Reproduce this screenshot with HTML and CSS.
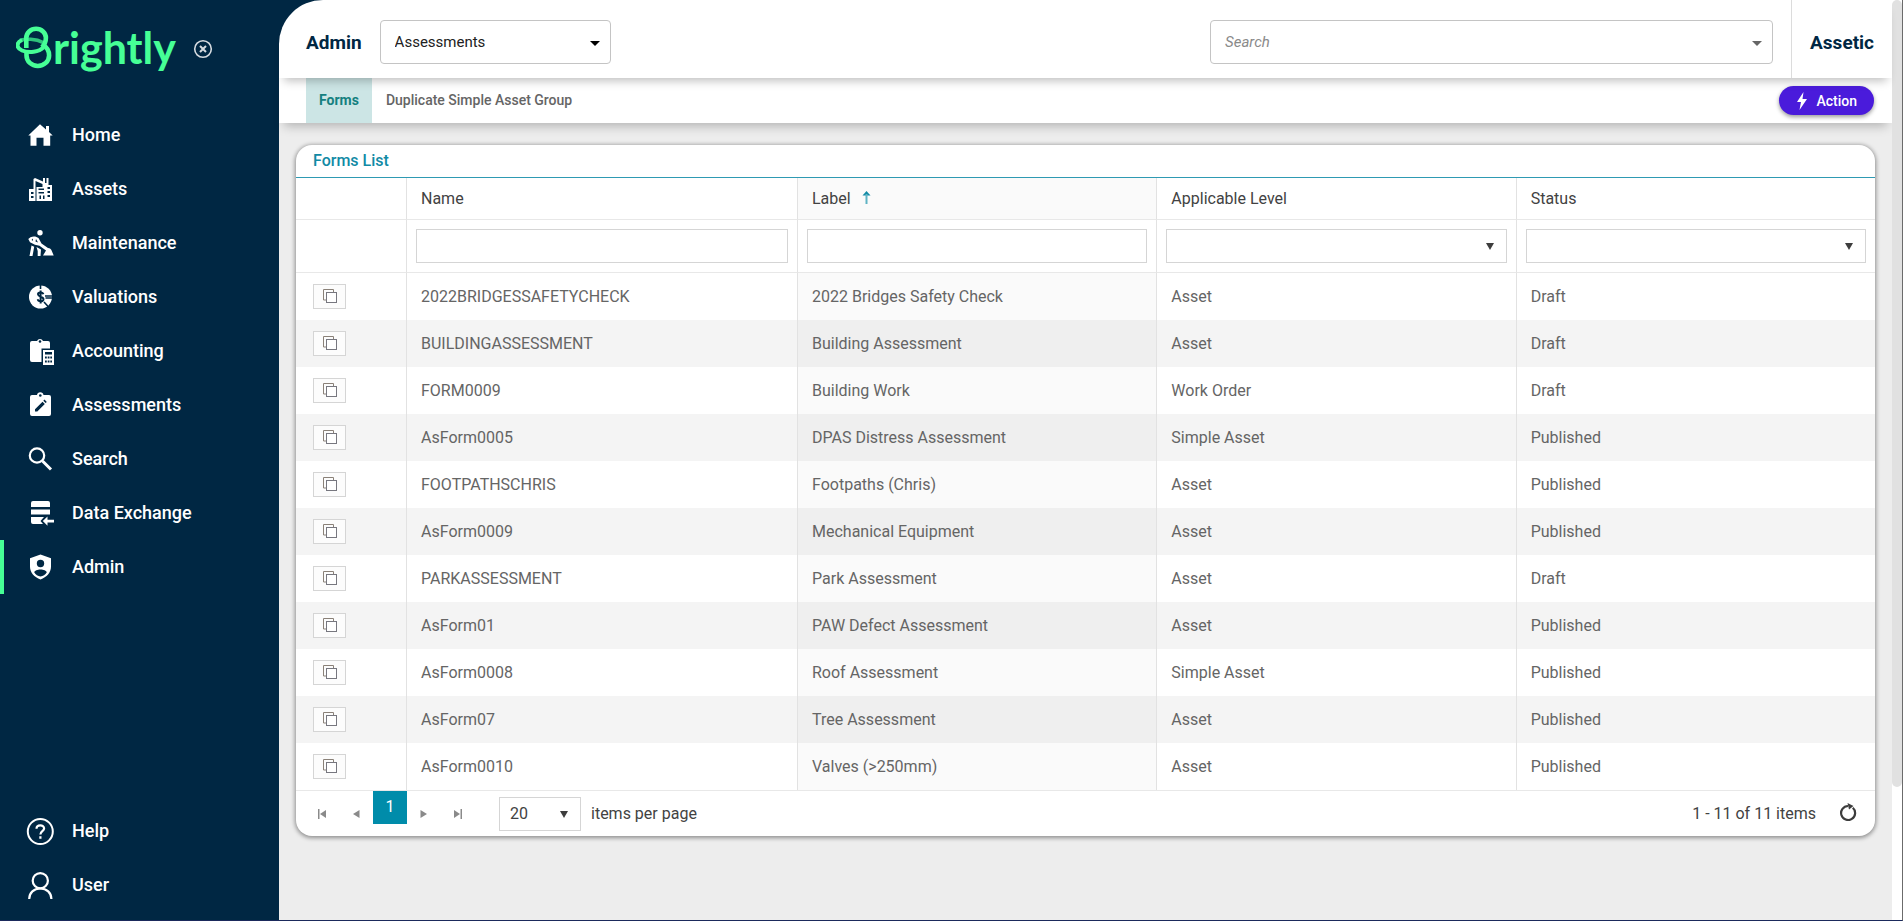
FILE: index.html
```html
<!DOCTYPE html>
<html lang="en">
<head>
  <meta charset="UTF-8" />
  <meta name="viewport" content="width=device-width, initial-scale=1.0"/>
  <title>Forms List</title>
  <link rel="stylesheet" href="styles.css">
</head>
<body>

  <!-- icon used by every row button -->
  <svg class="sprite" width="0" height="0" aria-hidden="true">
    <symbol id="copy" viewBox="0 0 16 16">
      <path d="M4 12H1.500V1.500H11.500V4" fill="none" stroke="#8a8178"/>
      <rect x="4.500" y="4.500" width="10" height="10" fill="#fff" stroke="#77777f"/>
    </symbol>
  </svg>

  <aside class="sidebar">
    <div class="brand">
      <a class="logo" href="#" aria-label="Brightly">
        <svg width="37" height="44" viewBox="0 0 37 44" fill="none" stroke="#46ff96" stroke-width="4.600">
          <path d="M4 14.500C9 12.500 20 12.500 27 16.500" stroke="#2fc27c" stroke-width="3.600"/>
          <path d="M10.500 26v3.500a11.300 10.500 0 0 0 22.600 0c0-5-2.500-8.500-6-10.500"/>
          <path d="M10.300 22V11.800a9.800 9 0 0 1 19.600 0c0 4-1.500 7-4 9.500"/>
          <path d="M6 14C0 16.500 0 22 6 24.500c7 2.800 17 1.500 21.500-3.200" stroke-width="4"/>
        </svg>
        <span>rightly</span>
      </a>
      <button class="close" aria-label="Close menu">
        <svg width="20" height="20" viewBox="0 0 20 20" fill="none" stroke="#d5dbe0" stroke-width="2">
          <circle cx="10" cy="10" r="8.300" stroke-width="1.600"/>
          <path d="M7 7l6 6M13 7l-6 6"/>
        </svg>
      </button>
    </div>

    <nav class="menu">
      <a href="#">
        <svg viewBox="0 0 28 28"><path d="M14 3.300l6 5.200V5h3v6l3.700 3.500h-2.500v10.200h-6.700v-8h-7v8H4.500V14.500H2.300z"/></svg>
        <span>Home</span>
      </a>
      <a href="#">
        <svg viewBox="0 0 28 28"><path fill-rule="evenodd" d="M3 14h4.500V4l1.500-1 8 3.500V3h2v5h1.500V3h2v7H26v16H3zM9.500 6v20h1V12h6V9zM5 17v2h2.500v-2zM5 21v2h2.500v-2zM12.500 13.500V15H18v-1.500zM12.500 17v1.500H18V17zM13.500 20.500V24h1.500v-3.500zM17 20.500V24h1.500v-3.500zM21.500 12v2H24v-2zM21.500 16v2H24v-2zM21.500 20v2H24v-2z"/></svg>
        <span>Assets</span>
      </a>
      <a href="#">
        <svg viewBox="0 0 28 28"><circle cx="14" cy="3.700" r="2.700"/><path d="M4.500 8.300c3-1.500 6-.8 8 .7l3 5.500 6.500 4.500c2 .3 3 1 3.500 2.200l2.200 5.300H17l3-5-6.500-4.700-4.500-1-5-2.500L2.300 10zM7 9.500L5.500 11l1.500.700zM10 10l-.5 2.500 2.500 1z" fill-rule="evenodd"/><path d="M5.500 16.500l2.700 1.300L6.500 27H3.500zM10.500 18l4.500 2.500-.5 6.500h-2.800v-5z"/></svg>
        <span>Maintenance</span>
      </a>
      <a href="#">
        <svg viewBox="0 0 28 28"><circle cx="14.500" cy="14" r="11.500"/><g fill="none" stroke="#002743" stroke-width="1.600"><path d="M14.500 2v4M19 13h8M19.500 15h7M18 19l5.500 6"/><path d="M17.300 11.300c-.5-2.400-5.300-2.300-5.300 0 0 2.700 5.500 2.200 5.500 5s-5.500 2.700-5.700 0M14.600 7.500v13" stroke-width="2"/></g></svg>
        <span>Valuations</span>
      </a>
      <a href="#">
        <svg viewBox="0 0 28 28"><path d="M6 4h5a3.300 3.300 0 0 1 6 0h5a2 2 0 0 1 2 2v5.500h-8.500V25H6a2 2 0 0 1-2-2V6a2 2 0 0 1 2-2z"/><circle cx="14" cy="4.500" r="1.300" fill="#002743"/><path fill-rule="evenodd" d="M17 13h11v15H17zM19 15v2.500h7V15zM19 19.500v2h1.800v-2zM21.700 19.500v2h1.800v-2zM24.300 19.500v2H26v-2zM19 23.500v2h1.800v-2zM21.700 23.500v2h1.800v-2zM24.300 23.500v2H26v-2z"/></svg>
        <span>Accounting</span>
      </a>
      <a href="#">
        <svg viewBox="0 0 28 28"><path d="M6 4h5a3.300 3.300 0 0 1 6.500 0H23a2 2 0 0 1 2 2v17a2 2 0 0 1-2 2H6a2 2 0 0 1-2-2V6a2 2 0 0 1 2-2z"/><circle cx="14.300" cy="4.500" r="1.300" fill="#002743"/><path d="M9 20.500v-2.300l7.500-7.500 2.300 2.300-7.500 7.500zM17.300 9.800l1.200-1.200 2.300 2.300-1.200 1.200z" fill="#002743"/></svg>
        <span>Assessments</span>
      </a>
      <a href="#">
        <svg viewBox="0 0 28 28" fill="none" stroke="#fff"><circle cx="11" cy="10.500" r="7.200" stroke-width="2.200"/><path d="M16.500 16l8.500 8.500" stroke-width="3"/></svg>
        <span>Search</span>
      </a>
      <a href="#">
        <svg viewBox="0 0 28 28"><path d="M7 2h15a2 2 0 0 1 2 2v4H5V4a2 2 0 0 1 2-2zM5 10.500h19v5H5zM5 18h13l-3.500 4 2.500 3H7a2 2 0 0 1-2-2zM21.500 17.500v3.300H28v2.600h-6.500v3.300L16.800 22z"/></svg>
        <span>Data Exchange</span>
      </a>
      <a class="active" href="#">
        <svg viewBox="0 0 28 28"><path fill-rule="evenodd" d="M14.500 1.500L25 5.200v8.500c0 5.800-4.300 10.300-10.500 12.800C8.300 24 4 19.500 4 13.700V5.200zM14.500 6.800a3.700 3.700 0 1 0 0 7.400 3.700 3.700 0 0 0 0-7.400zM14.500 16.500c-3 0-6 1.200-6.300 2.800 1.500 2.500 3.700 4 6.300 4.200 2.600-.2 4.800-1.700 6.300-4.200-.3-1.600-3.300-2.800-6.300-2.800z"/></svg>
        <span>Admin</span>
      </a>
    </nav>

    <nav class="menu bottom">
      <a href="#">
        <svg viewBox="0 0 28 28" fill="none" stroke="#fff" stroke-width="2"><circle cx="14.300" cy="14.500" r="12.500"/><path d="M10.500 11.800c0-4.700 7.600-4.500 7.600-.3 0 2.700-3.700 2.800-3.700 6M14.400 19.300v2.400" stroke-width="2.200"/></svg>
        <span>Help</span>
      </a>
      <a href="#">
        <svg viewBox="0 0 28 28" fill="none" stroke="#fff" stroke-width="2.200"><circle cx="14.300" cy="9.700" r="7.600"/><path d="M3.200 28c0-6.500 4.800-10.500 11.100-10.500S25.400 21.500 25.400 28"/></svg>
        <span>User</span>
      </a>
    </nav>
  </aside>

  <div class="main">
    <header class="topbar">
      <h1>Admin</h1>
      <div class="dropdown module">
        <select aria-label="Module">
          <option>Assessments</option>
        </select>
      </div>
      <div class="dropdown search">
        <input type="text" placeholder="Search" aria-label="Search">
      </div>
      <div class="tenant">Assetic</div>
    </header>

    <div class="tabs">
      <a class="tab selected" href="#">Forms</a>
      <a class="tab" href="#">Duplicate Simple Asset Group</a>
      <button class="action">
        <svg width="12" height="18" viewBox="0 0 12 18"><path d="M7.500 0L1 10h4L3.500 18 11 7H6.500z" fill="#fff"/></svg>
        Action
      </button>
    </div>

    <section class="card">
      <h2>Forms List</h2>
      <table>
        <colgroup>
          <col class="col-copy"><col class="col-name"><col><col><col>
        </colgroup>
        <thead>
          <tr>
            <th></th>
            <th>Name</th>
            <th class="sorted">Label
              <svg width="9" height="13" viewBox="0 0 9 13"><path d="M4.500 0L8.500 4.500H.5z" fill="#118aa5"/><path d="M4.500 3v10" stroke="#5fb3c4" stroke-width="2"/></svg>
            </th>
            <th>Applicable Level</th>
            <th>Status</th>
          </tr>
          <tr class="filters">
            <td></td>
            <td><input type="text" aria-label="Filter name"></td>
            <td><input type="text" aria-label="Filter label"></td>
            <td><div class="dropdown"><select aria-label="Filter level"><option></option></select></div></td>
            <td><div class="dropdown"><select aria-label="Filter status"><option></option></select></div></td>
          </tr>
        </thead>
        <tbody>
          <tr><td><button class="copy" aria-label="Copy"><svg><use href="#copy"/></svg></button></td><td>2022BRIDGESSAFETYCHECK</td><td>2022 Bridges Safety Check</td><td>Asset</td><td>Draft</td></tr>
          <tr><td><button class="copy" aria-label="Copy"><svg><use href="#copy"/></svg></button></td><td>BUILDINGASSESSMENT</td><td>Building Assessment</td><td>Asset</td><td>Draft</td></tr>
          <tr><td><button class="copy" aria-label="Copy"><svg><use href="#copy"/></svg></button></td><td>FORM0009</td><td>Building Work</td><td>Work Order</td><td>Draft</td></tr>
          <tr><td><button class="copy" aria-label="Copy"><svg><use href="#copy"/></svg></button></td><td>AsForm0005</td><td>DPAS Distress Assessment</td><td>Simple Asset</td><td>Published</td></tr>
          <tr><td><button class="copy" aria-label="Copy"><svg><use href="#copy"/></svg></button></td><td>FOOTPATHSCHRIS</td><td>Footpaths (Chris)</td><td>Asset</td><td>Published</td></tr>
          <tr><td><button class="copy" aria-label="Copy"><svg><use href="#copy"/></svg></button></td><td>AsForm0009</td><td>Mechanical Equipment</td><td>Asset</td><td>Published</td></tr>
          <tr><td><button class="copy" aria-label="Copy"><svg><use href="#copy"/></svg></button></td><td>PARKASSESSMENT</td><td>Park Assessment</td><td>Asset</td><td>Draft</td></tr>
          <tr><td><button class="copy" aria-label="Copy"><svg><use href="#copy"/></svg></button></td><td>AsForm01</td><td>PAW Defect Assessment</td><td>Asset</td><td>Published</td></tr>
          <tr><td><button class="copy" aria-label="Copy"><svg><use href="#copy"/></svg></button></td><td>AsForm0008</td><td>Roof Assessment</td><td>Simple Asset</td><td>Published</td></tr>
          <tr><td><button class="copy" aria-label="Copy"><svg><use href="#copy"/></svg></button></td><td>AsForm07</td><td>Tree Assessment</td><td>Asset</td><td>Published</td></tr>
          <tr><td><button class="copy" aria-label="Copy"><svg><use href="#copy"/></svg></button></td><td>AsForm0010</td><td>Valves (&gt;250mm)</td><td>Asset</td><td>Published</td></tr>
        </tbody>
      </table>

      <div class="pager">
        <button aria-label="First page"><svg width="10" height="10" viewBox="0 0 10 10"><path d="M1 0h1.500v10H1zM9 1v8L3 5z"/></svg></button>
        <button aria-label="Previous page"><svg width="10" height="10" viewBox="0 0 10 10"><path d="M8.500 1v8L2 5z"/></svg></button>
        <button class="current">1</button>
        <button aria-label="Next page"><svg width="10" height="10" viewBox="0 0 10 10"><path d="M1.500 1v8L8 5z"/></svg></button>
        <button aria-label="Last page"><svg width="10" height="10" viewBox="0 0 10 10"><path d="M7.500 0H9v10H7.500zM1 1v8l6-4z"/></svg></button>
        <div class="dropdown size">
          <select id="pageSize"><option>20</option></select>
        </div>
        <label for="pageSize">items per page</label>
        <span class="info">1 - 11 of 11 items</span>
        <button class="refresh" aria-label="Refresh">
          <svg width="18" height="18" viewBox="0 0 18 18"><path d="M13.800 4.800A7 7 0 1 1 9 3" fill="none" stroke="#3d3d3d" stroke-width="2.200"/><path d="M8.500 0l6 3-4.500 3.500z" fill="#3d3d3d"/></svg>
        </button>
      </div>
    </section>
  </div>

  <div class="scrollbar"><div class="thumb"></div></div>

</body>
</html>
```
FILE: styles.css
```css
* {
  box-sizing: border-box;
}
body {
  display: flex;
  margin: 0;
  min-height: 100vh;
  font-family: Roboto, sans-serif;
  font-size: 16px;
  color: #656565;
  background-color: #ededed;
  border-right: 1px solid #6b6b6b;
  border-bottom: 1px solid #1b2a5c;
}
a {
  color: inherit;
  text-decoration: none;
}
button, input, select {
  font: inherit;
  color: inherit;
}
button {
  padding: 0;
  border: none;
  background: none;
  cursor: pointer;
}
.sprite {
  position: absolute;
}

/* sidebar */
.sidebar {
  display: flex;
  flex-direction: column;
  flex: none;
  width: 279px;
  padding-bottom: 8px;
  background-color: #002743;
  color: #fff;
}
.brand {
  display: flex;
  align-items: flex-start;
  height: 108px;
  padding: 26px 0 0 16px;
}
.logo {
  display: flex;
  width: 177px;
  color: #46ff96;
  font-family: Lato, sans-serif;
  font-size: 43px;
  font-weight: 700;
  line-height: 44px;
}
.close {
  margin-top: 13px;
  height: 20px;
}
.close svg {
  display: block;
}
.menu a {
  display: flex;
  align-items: center;
  gap: 18px;
  height: 54px;
  padding-left: 22px;
  border-left: 4px solid transparent;
  font-size: 18px;
  font-weight: 500;
}
.menu span {
  padding-bottom: 2px;
}
.menu svg {
  width: 28px;
  height: 28px;
  overflow: visible;
}
.menu svg:not([fill]) {
  fill: #fff;
}
.menu a.active {
  border-image: linear-gradient(#46ff96, #46ff96) 1;
}
.menu.bottom {
  margin-top: auto;
}

/* top bars */
.main {
  flex: 1;
  min-width: 0;
  background: linear-gradient(#002743, #002743) 0 0 / 60px 60px no-repeat;
}
.topbar {
  display: flex;
  align-items: center;
  position: relative;
  z-index: 1;
  height: 78px;
  padding: 0 18px 0 27px;
  background-color: #fff;
  border-top-left-radius: 44px;
  box-shadow: 0 8px 10px -5px rgba(0,0,0,0.25);
}
.topbar h1, .tenant {
  margin: 0;
  padding-top: 6px;
  font-size: 19px;
  font-weight: 700;
  color: #002743;
}
.dropdown {
  position: relative;
}
.dropdown::after {
  content: "";
  position: absolute;
  top: 50%;
  right: 13px;
  margin-top: -3px;
  border: 4px solid transparent;
  border-top: 7px solid #3d3d3d;
  border-bottom: none;
  pointer-events: none;
}
.dropdown select {
  appearance: none;
}
.topbar .dropdown {
  margin-top: 6px;
}
.topbar select, .topbar input {
  display: block;
  width: 100%;
  height: 44px;
  padding: 0 14px;
  border: 1px solid #c4c4c4;
  border-radius: 4px;
  background-color: #fff;
  font-size: 15px;
}
.topbar select {
  color: #212121;
}
.topbar input::placeholder {
  color: #8a8a8a;
  font-style: italic;
}
.topbar .dropdown::after {
  right: 11px;
  margin-top: -1px;
  border-width: 5px 5px 0;
}
.topbar .search::after {
  border-top-color: #666;
}
.module {
  width: 231px;
  margin-left: 18px;
}
.topbar .module::after {
  border-top-color: #000;
}
.search {
  width: 563px;
  margin-left: auto;
}
.tenant {
  display: flex;
  align-items: center;
  height: 78px;
  margin-left: 18px;
  padding-left: 18px;
  border-left: 1px solid #dcdcdc;
}
.tabs {
  display: flex;
  align-items: center;
  height: 45px;
  padding: 0 18px 0 27px;
  background-color: #fff;
  box-shadow: 0 8px 10px -5px rgba(0,0,0,0.25);
}
.tab {
  padding: 0 14px;
  font-size: 14px;
  font-weight: 500;
  line-height: 45px;
}
.tab.selected {
  padding: 0 13px;
  background-color: #cce5e5;
  color: #14807f;
  font-weight: 700;
}
.action {
  display: flex;
  align-items: center;
  gap: 8px;
  height: 29px;
  margin-left: auto;
  padding: 0 17px;
  border-radius: 15px;
  background-color: #4a1bdb;
  color: #fff;
  font-size: 14px;
  font-weight: 500;
  box-shadow: 0 2px 4px rgba(0,0,0,0.4);
}

/* grid */
.card {
  margin: 22px 17px 0;
  overflow: hidden;
  background-color: #fff;
  border-radius: 16px;
  box-shadow: 0 1px 4px 1px rgba(0,0,0,0.4);
}
.card h2 {
  margin: 0;
  padding-left: 17px;
  border-bottom: 1px solid #2e9ab3;
  font-size: 16px;
  font-weight: 500;
  line-height: 32px;
  color: #118aa5;
}
table {
  width: 100%;
  table-layout: fixed;
  border-collapse: separate;
  border-spacing: 0;
}
.col-copy {
  width: 110px;
}
.col-name {
  width: 391px;
}
th, td {
  height: 47px;
  padding: 0 14px 1px;
  border-left: 1px solid #e2e2e2;
  text-align: left;
}
th {
  height: 42px;
  border-bottom: 1px solid #e8e8e8;
  font-weight: 400;
  color: #424242;
}
th svg {
  margin-left: 7px;
}
th:first-child, td:first-child {
  padding-left: 17px;
  border-left: none;
}
.filters td {
  height: 53px;
  padding: 0 9px;
  border-bottom: 1px solid #e8e8e8;
}
.filters input, .filters select, .size select {
  display: block;
  width: 100%;
  height: 34px;
  padding: 0 10px;
  border: 1px solid #d5d5d5;
  border-radius: 0;
  background-color: #fff;
}
.sorted, tbody td:nth-child(3) {
  background-color: #fafafa;
}
tbody tr:nth-child(even) td {
  background-color: #f4f4f4;
}
tbody tr:nth-child(even) td:nth-child(3) {
  background-color: #efefef;
}
.copy {
  display: flex;
  align-items: center;
  justify-content: center;
  width: 33px;
  height: 25px;
  border: 1px solid #d5d5d5;
  background-color: #fcfcfc;
}
.copy svg {
  width: 16px;
  height: 16px;
}

/* pager */
.pager {
  display: flex;
  align-items: center;
  height: 46px;
  padding: 0 10px 0 9px;
  border-top: 1px solid #e8e8e8;
  color: #424242;
}
.pager button {
  width: 34px;
  height: 33px;
  fill: #8a8a8a;
}
.pager .current {
  align-self: flex-start;
  background-color: #008caa;
  color: #fff;
  padding-bottom: 2px;
}
.size {
  width: 82px;
  margin: 0 10px 0 24px;
}
.info {
  margin-left: auto;
  margin-right: 15px;
}

/* scrollbar */
.scrollbar {
  flex: none;
  width: 10px;
  background-color: #fff;
}
.thumb {
  height: 787px;
  border-radius: 5px;
  background-color: #e1e1e1;
}
```
